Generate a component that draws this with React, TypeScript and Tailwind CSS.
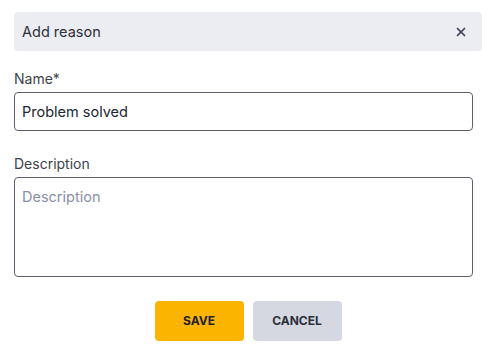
import { X } from "lucide-react";

export default function App() {
  return (
    <div
      className="h-[357px] w-[493px] bg-white pt-3 pl-[14px] pr-[11px]"
      style={{ fontFamily: "Inter, 'Noto Sans', sans-serif" }}
    >
      <div className="flex h-[39px] items-center justify-between rounded bg-[#ecedf3] pl-2 pr-[14px]">
        <span className="text-[14.5px] text-[#2b2f3a]">Add reason</span>
        <X className="h-[14px] w-[14px] text-[#3b4157]" strokeWidth={3} />
      </div>

      <div className="pr-[9px]">
        <label className="mt-[19px] block text-[14px] leading-[18px] text-[#3d414c]">Name*</label>
        <input
          defaultValue="Problem solved"
          className="mt-[4px] block h-[39px] w-full rounded border border-[#5c616d] px-[7px] text-[14.5px] text-[#23262e] outline-none"
        />

        <label className="mt-[24px] block text-[14px] leading-[18px] text-[#3d414c]">Description</label>
        <textarea
          placeholder="Description"
          className="mt-[4px] block h-[100px] w-full resize-none rounded border border-[#5c616d] px-[7px] py-[9px] text-[14.5px] leading-[19px] text-[#23262e] outline-none placeholder:text-[#8a8fa8]"
        />
      </div>

      <div className="mt-[24px] flex justify-center gap-[9px]">
        <button className="h-[40px] w-[89px] rounded bg-[#fbb500] text-[12px] font-bold text-[#1f2230]">
          SAVE
        </button>
        <button className="h-[40px] w-[89px] rounded bg-[#d5d8e1] text-[12px] font-bold text-[#2b2f3a]">
          CANCEL
        </button>
      </div>
    </div>
  );
}
